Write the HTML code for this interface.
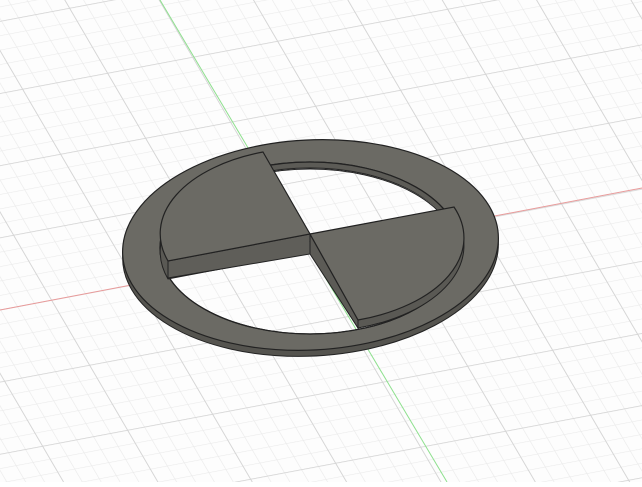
<!DOCTYPE html>
<html><head><style>html,body{margin:0;padding:0;background:#fff;overflow:hidden}</style></head>
<body>
<svg width="642" height="482" viewBox="0 0 642 482" xmlns="http://www.w3.org/2000/svg">
<defs>
<pattern id="gf" patternUnits="userSpaceOnUse" width="1" height="1" patternTransform="matrix(17,-3.2,7.6,13,306,252)">
<path d="M0,0H1M0,0V1" stroke="#eaeaea" stroke-width="0.08" fill="none"/>
</pattern>
<pattern id="gm" patternUnits="userSpaceOnUse" width="5" height="5" patternTransform="matrix(17,-3.2,7.6,13,306,252)">
<path d="M0,0H5M0,0V5" stroke="#d2d2d2" stroke-width="0.1" fill="none"/>
</pattern>
<clipPath id="hole"><ellipse cx="310" cy="248" rx="150" ry="86"/></clipPath>
</defs>
<rect width="642" height="482" fill="#fdfdfd"/>
<rect width="642" height="482" fill="url(#gf)"/>
<rect width="642" height="482" fill="url(#gm)"/>
<line x1="0" y1="310" x2="642" y2="188" stroke="#e89a9a" stroke-width="1"/>
<line x1="160" y1="0" x2="447" y2="482" stroke="#8ee08e" stroke-width="1"/>

<path fill-rule="evenodd" fill="#55544f" stroke="#222" stroke-width="1" transform="translate(0,6)"
 d="M123,245 A188,105 -3 1 0 498,245 A188,105 -3 1 0 123,245 Z M160,248 A150,86 0 1 0 460,248 A150,86 0 1 0 160,248 Z"/>
<path fill-rule="evenodd" fill="#6b6a64" stroke="#222" stroke-width="1.2"
 d="M123,245 A188,105 -3 1 0 498,245 A188,105 -3 1 0 123,245 Z M160,248 A150,86 0 1 0 460,248 A150,86 0 1 0 160,248 Z"/>
<g clip-path="url(#hole)">
<path d="M160,248 A150,86 0 0 1 460,248" fill="none" stroke="#5c5b56" stroke-width="10"/>
</g>
<path d="M162,253 A148,84 0 0 1 458,253" fill="none" stroke="#222" stroke-width="1"/>
<ellipse cx="310" cy="248" rx="150" ry="86" fill="none" stroke="#222" stroke-width="1.2"/>

<path d="M310,234 L263,152 A150,86 0 0 0 168,261 Z" transform="translate(0,18)" fill="#5a5954" stroke="#222" stroke-width="1"/>
<polygon points="168,261 310,234 310,254 168,278" fill="#5f5e59" stroke="#222" stroke-width="1"/>
<path d="M310,234 L263,152 A150,86 0 0 0 168,261 Z" fill="#6b6a64" stroke="#222" stroke-width="1.2"/>

<path d="M310,234 L454,207 A150,86 0 0 1 358,320 Z" transform="translate(0,8)" fill="#5a5954" stroke="#222" stroke-width="1"/>
<polygon points="310,234 358,320 358,328 310,254" fill="#5c5b56" stroke="#222" stroke-width="1"/>
<path d="M310,234 L454,207 A150,86 0 0 1 358,320 Z" fill="#6b6a64" stroke="#222" stroke-width="1.2"/>
</svg>
</body></html>
